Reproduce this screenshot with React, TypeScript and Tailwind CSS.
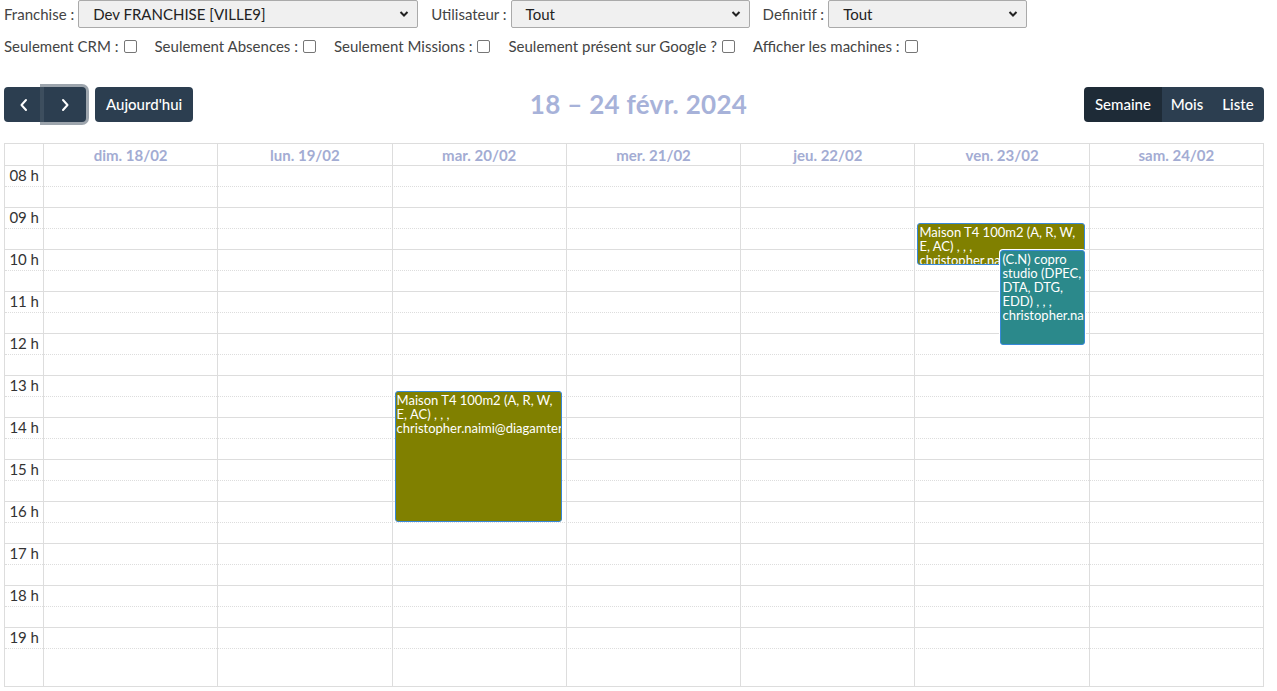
import React from "react";

const days = ["dim. 18/02", "lun. 19/02", "mar. 20/02", "mer. 21/02", "jeu. 22/02", "ven. 23/02", "sam. 24/02"];
const hours = ["08", "09", "10", "11", "12", "13", "14", "15", "16", "17", "18", "19"];

function Select({ label, value, width }: { label: string; value: string; width: string }) {
  return (
    <div className="flex items-center">
      <span className="text-[15px] text-[#444] mr-[4px]">{label}</span>
      <div className={"h-[28px] flex items-center justify-between bg-[#f0f0f0] border border-[#aaa] rounded-[2px] pl-[14px] pr-[8px] text-[15px] text-[#222] " + width}>
        <span>{value}</span>
        <svg width="10" height="8" viewBox="0 0 10 8">
          <path d="M1.5 2 L5 5.5 L8.5 2" fill="none" stroke="#222" strokeWidth="2" />
        </svg>
      </div>
    </div>
  );
}

function Check({ label }: { label: string }) {
  return (
    <div className="flex items-center">
      <span className="text-[15px] text-[#444]">{label}</span>
      <span className="ml-[5px] w-[13px] h-[13px] border border-[#767676] rounded-[2px] bg-white inline-block" />
    </div>
  );
}

type Ev = { col: number; top: number; height: number; left: number; right: number; bg: string; lines: string[]; inner?: boolean };

const events: Ev[] = [
  { col: 2, top: 225, height: 131, left: 2, right: 4, bg: "bg-[#808000]", lines: ["Maison T4 100m2 (A, R, W,", "E, AC) , , ,", "christopher.naimi@diagamter.com"] },
  { col: 5, top: 57, height: 42, left: 2, right: 4, bg: "bg-[#808000]", lines: ["Maison T4 100m2 (A, R, W,", "E, AC) , , ,", "christopher.naimi@diagamter.com"] },
  { col: 5, top: 84, height: 95, left: 85, right: 4, bg: "bg-[#2b898b]", lines: ["(C.N) copro", "studio (DPEC,", "DTA, DTG,", "EDD) , , ,", "christopher.naimi@diagamter.com"], inner: true },
];

export default function App() {
  const slots: { label?: string; last: boolean; hourEnd: boolean }[] = [];
  hours.forEach((h) => {
    slots.push({ label: h + " h", last: false, hourEnd: false });
    slots.push({ last: h === "19", hourEnd: true });
  });

  return (
    <div className="w-[1277px] h-[691px] bg-white overflow-hidden pl-[4px] pr-[13px]" style={{ fontFamily: "Lato, 'Open Sans', sans-serif" }}>
      <div className="flex items-center gap-[13px] h-[28px]">
        <Select label="Franchise :" value="Dev FRANCHISE [VILLE9]" width="w-[340px]" />
        <Select label="Utilisateur :" value="Tout" width="w-[239px]" />
        <Select label="Definitif :" value="Tout" width="w-[199px]" />
      </div>
      <div className="flex items-center gap-[18px] mt-[10px] h-[17px]">
        <Check label="Seulement CRM :" />
        <Check label="Seulement Absences :" />
        <Check label="Seulement Missions :" />
        <Check label="Seulement présent sur Google ?" />
        <Check label="Afficher les machines :" />
      </div>

      <div className="flex items-center justify-between mt-[32px] h-[35px]">
        <div className="flex items-center w-[300px]">
          <div className="flex">
            <button className="w-[39px] h-[35px] bg-[#2c3e50] rounded-l-[4px] flex items-center justify-center">
              <svg width="12" height="14" viewBox="0 0 12 14"><path d="M8 2 L3.5 7 L8 12" fill="none" stroke="white" strokeWidth="2" strokeLinecap="round" strokeLinejoin="round" /></svg>
            </button>
            <button className="w-[43px] h-[35px] bg-[#2c3e50] rounded-r-[4px] flex items-center justify-center border-l border-[#3d4e5f] shadow-[0_0_0_3px_rgba(76,91,106,0.55)]">
              <svg width="12" height="14" viewBox="0 0 12 14"><path d="M4 2 L8.5 7 L4 12" fill="none" stroke="white" strokeWidth="2" strokeLinecap="round" strokeLinejoin="round" /></svg>
            </button>
          </div>
          <button className="ml-[9px] h-[35px] px-[11px] bg-[#2c3e50] rounded-[4px] text-white text-[15px] font-medium">Aujourd'hui</button>
        </div>
        <div className="ml-[9px] text-[26px] font-bold text-[#a7b2d9] tracking-[0.3px]">18 – 24 févr. 2024</div>
        <div className="flex w-[300px] justify-end">
          <div className="flex rounded-[4px] overflow-hidden h-[35px] text-white text-[15px] font-medium">
            <button className="w-[78px] bg-[#1e2b37]">Semaine</button>
            <button className="w-[50px] bg-[#2c3e50]">Mois</button>
            <button className="w-[52px] bg-[#2c3e50]">Liste</button>
          </div>
        </div>
      </div>

      <div className="mt-[21px] border border-[#ddd]">
        <div className="grid grid-cols-[38px_repeat(7,1fr)] h-[22px] border-b border-[#ddd]">
          <div />
          {days.map((d) => (
            <div key={d} className="border-l border-[#ddd] flex items-center justify-center text-[15px] font-bold text-[#a3acd3]">
              {d}
            </div>
          ))}
        </div>
        <div className="relative">
          {slots.map((s, i) => (
            <div
              key={i}
              className={
                "flex " +
                (s.last ? "h-[37px]" : "h-[21px] ") +
                (s.last ? "" : s.hourEnd ? " border-b border-[#ddd]" : " border-b border-dotted border-[#ddd]")
              }
            >
              <div className="w-[38px] shrink-0 text-right pr-[4px] text-[15px] leading-[18px] text-[#333]">{s.label}</div>
            </div>
          ))}
          <div className="absolute inset-0 left-[38px] grid grid-cols-7">
            {days.map((d, ci) => (
              <div key={d} className="relative border-l border-[#ddd]">
                {events
                  .filter((e) => e.col === ci)
                  .map((e, k) => (
                    <div
                      key={k}
                      className={
                        "absolute overflow-hidden rounded-[3px] border border-[#3788d8] text-white text-[13px] leading-[14px] px-[1px] pt-[1px] " +
                        e.bg +
                        (e.inner ? " shadow-[0_0_0_1px_white]" : "")
                      }
                      style={{ top: e.top, height: e.height, left: e.left, right: e.right }}
                    >
                      {e.lines.map((l, j) => (
                        <div key={j} className="whitespace-nowrap">{l}</div>
                      ))}
                    </div>
                  ))}
              </div>
            ))}
          </div>
        </div>
      </div>
    </div>
  );
}
